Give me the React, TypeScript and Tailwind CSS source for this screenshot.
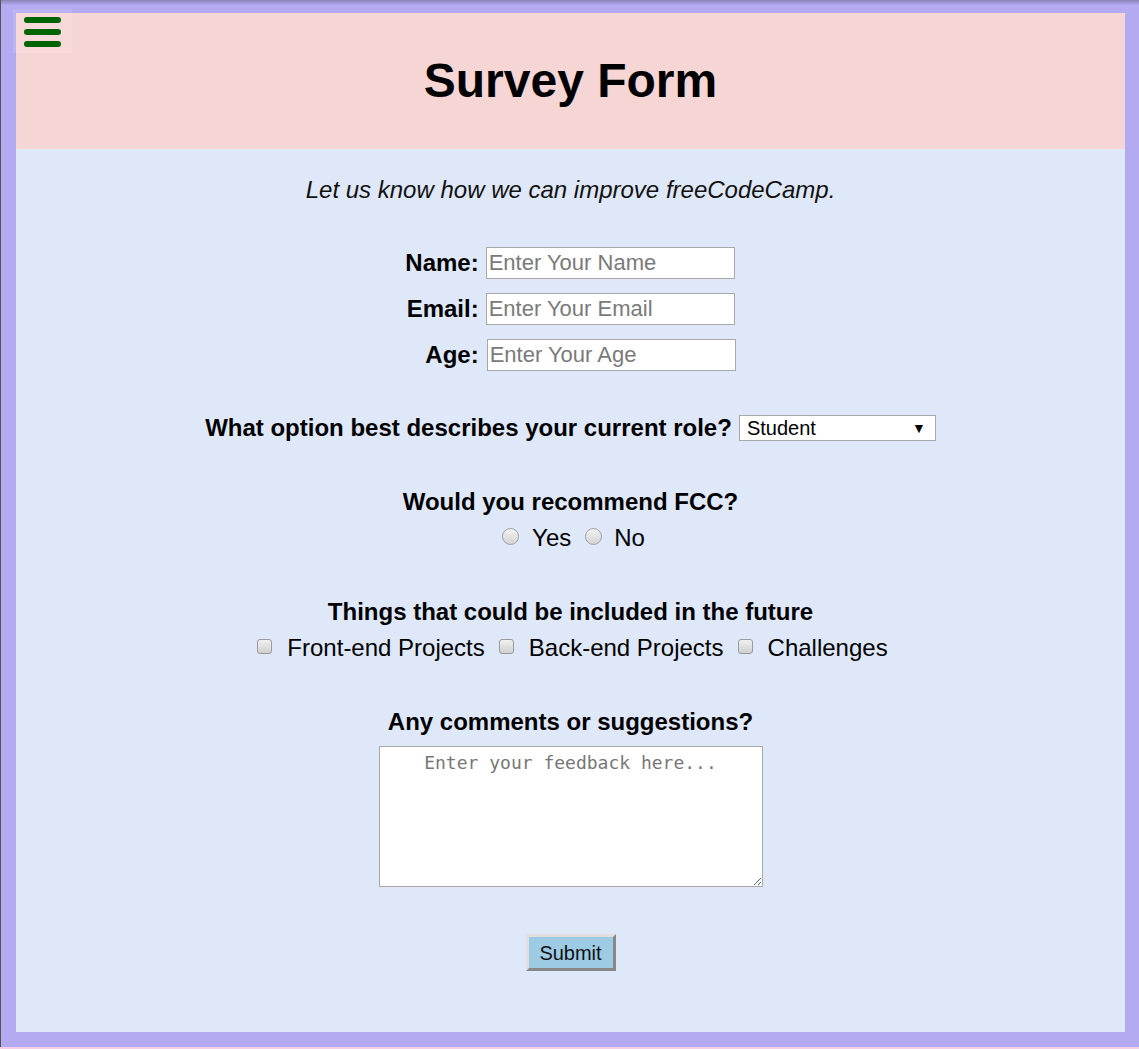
import React from "react";

const font = { fontFamily: '"Liberation Sans", Arial, sans-serif' };

const inputCls =
  "w-[249px] h-[32px] bg-white border border-[#a9a9a9] px-[2px] text-[22px] leading-none placeholder:text-[#7a7a7a] outline-none";
const radioCls =
  "appearance-none w-[17px] h-[17px] rounded-full border border-[#a0a0a0] bg-gradient-to-b from-[#f2f2f2] to-[#d4d4d4] mt-[-3px]";
const checkCls =
  "appearance-none w-[15px] h-[15px] rounded-[3px] border border-[#9a9a9a] bg-gradient-to-b from-[#f0f0f0] to-[#d0d0d0] mt-[-4px] mr-[15px]";

export default function App() {
  return (
    <div className="min-h-[1049px] w-full bg-[#b4aaf1] relative" style={font}>
      <div className="absolute inset-x-0 top-0 h-[5px] bg-gradient-to-b from-[#8a82b8] to-[#b4aaf1]" />
      <div className="absolute left-0 top-0 bottom-0 w-[1px] bg-[#555]" />
      <div className="pt-[13px] pl-[16px] pr-[14px] pb-[15px]">
        <div className="w-[1109px] h-[1019px] flex flex-col">
          <header className="relative h-[136px] bg-[#f6d5d5] flex items-center justify-center">
            <div className="absolute left-[-3px] top-[-4px] w-[59px] h-[44px] bg-white/10 flex flex-col items-center justify-center gap-[6px] pt-[2px]">
              <span className="block w-[37px] h-[6px] rounded-full bg-[#006400]" />
              <span className="block w-[37px] h-[6px] rounded-full bg-[#006400]" />
              <span className="block w-[37px] h-[6px] rounded-full bg-[#006400]" />
            </div>
            <h1 className="text-[48px] font-bold text-black leading-none">Survey Form</h1>
          </header>
          <main className="flex-1 bg-[#dfe8f9] flex flex-col items-center text-black">
            <p className="italic text-[24px] mt-[27px] leading-[28px] text-[#111]">
              Let us know how we can improve freeCodeCamp.
            </p>
            <div className="mt-[43px] grid grid-cols-[auto_auto] gap-x-[7px] gap-y-[14px] items-center">
              <label className="font-bold text-[24px] leading-none text-right">Name:</label>
              <input placeholder="Enter Your Name" className={inputCls} />
              <label className="font-bold text-[24px] leading-none text-right">Email:</label>
              <input placeholder="Enter Your Email" className={inputCls} />
              <label className="font-bold text-[24px] leading-none text-right">Age:</label>
              <input placeholder="Enter Your Age" className={inputCls + " ml-[1px]"} />
            </div>
            <div className="mt-[43px] h-[28px] flex items-center gap-[7px]">
              <label className="font-bold text-[24px] leading-[28px]">What option best describes your current role?</label>
              <div className="relative w-[197px] h-[26px]">
                <select className="appearance-none w-full h-full bg-white border border-[#a9a9a9] pl-[7px] text-[20px] leading-none outline-none">
                  <option>Student</option>
                  <option>Full-time job</option>
                  <option>Prefer not to say</option>
                  <option>Other</option>
                </select>
                <span className="pointer-events-none absolute right-[10px] top-[3px] text-[14px] leading-[20px]">▼</span>
              </div>
            </div>
            <h3 className="mt-[46px] font-bold text-[24px] leading-[28px]">Would you recommend FCC?</h3>
            <div className="mt-[8px] h-[28px] flex items-center text-[24px] leading-[28px] pl-[6px]">
              <input type="radio" name="rec" className={radioCls + " mr-[13px]"} />
              <span>Yes</span>
              <input type="radio" name="rec" className={radioCls + " ml-[14px] mr-[12px]"} />
              <span>No</span>
            </div>
            <h3 className="mt-[46px] font-bold text-[24px] leading-[28px]">Things that could be included in the future</h3>
            <div className="mt-[8px] h-[28px] flex items-center text-[24px] leading-[28px] pl-[4px]">
              <input type="checkbox" className={checkCls} />
              <span>Front-end Projects</span>
              <input type="checkbox" className={checkCls + " ml-[14px]"} />
              <span>Back-end Projects</span>
              <input type="checkbox" className={checkCls + " ml-[14px]"} />
              <span>Challenges</span>
            </div>
            <h3 className="mt-[46px] font-bold text-[24px] leading-[28px]">Any comments or suggestions?</h3>
            <textarea
              placeholder="Enter your feedback here..."
              className="mt-[10px] w-[384px] h-[141px] bg-white border border-[#a9a9a9] text-center text-[18px] leading-[22px] pt-[5px] placeholder:text-[#777] outline-none resize"
              style={{ fontFamily: '"DejaVu Sans Mono", monospace' }}
            />
            <button
              type="submit"
              className="mt-[47px] w-[90px] h-[37px] bg-[#9dcbe4] text-[20px] text-[#111] border-[3px] border-t-[#e0e0e0] border-l-[#e0e0e0] border-b-[#888] border-r-[#888]"
            >
              Submit
            </button>
          </main>
        </div>
      </div>
      <div className="absolute left-0 right-0 bottom-0 h-[2px] bg-[#f4cfe6]" />
    </div>
  );
}
